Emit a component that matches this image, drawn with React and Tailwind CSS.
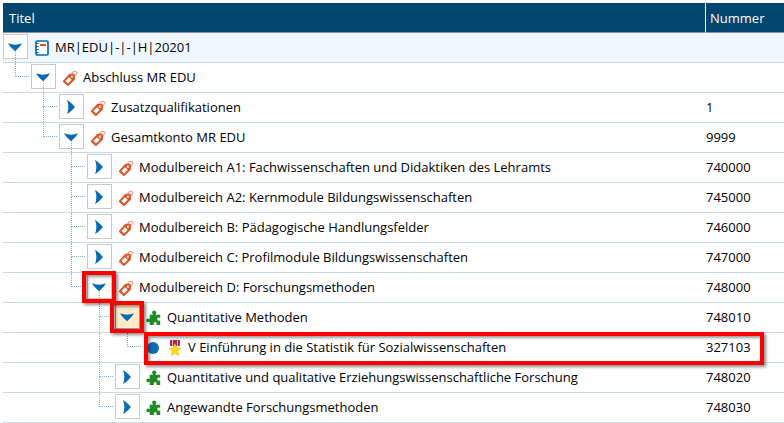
const rows = [
  { level: 0, guides: [], open: true, icon: 'book', title: 'MR|EDU|-|-|H|20201', number: '', selected: true },
  { level: 1, guides: ['end'], open: true, icon: 'tag', title: 'Abschluss MR EDU', number: '' },
  { level: 2, guides: ['none', 'tee'], open: false, icon: 'tag', title: 'Zusatzqualifikationen', number: '1' },
  { level: 2, guides: ['none', 'end'], open: true, icon: 'tag', title: 'Gesamtkonto MR EDU', number: '9999' },
  { level: 3, guides: ['none', 'none', 'tee'], open: false, icon: 'tag', title: 'Modulbereich A1: Fachwissenschaften und Didaktiken des Lehramts', number: '740000' },
  { level: 3, guides: ['none', 'none', 'tee'], open: false, icon: 'tag', title: 'Modulbereich A2: Kernmodule Bildungswissenschaften', number: '745000' },
  { level: 3, guides: ['none', 'none', 'tee'], open: false, icon: 'tag', title: 'Modulbereich B: Pädagogische Handlungsfelder', number: '746000' },
  { level: 3, guides: ['none', 'none', 'tee'], open: false, icon: 'tag', title: 'Modulbereich C: Profilmodule Bildungswissenschaften', number: '747000' },
  { level: 3, guides: ['none', 'none', 'end'], open: true, icon: 'tag', title: 'Modulbereich D: Forschungsmethoden', number: '748000', marked: true },
  { level: 4, guides: ['none', 'none', 'none', 'tee'], open: true, icon: 'puzzle', title: 'Quantitative Methoden', number: '748010', marked: true, focused: true },
  { level: 5, guides: ['none', 'none', 'none', 'line', 'end'], leaf: true, icon: 'medal', title: 'V Einführung in die Statistik für Sozialwissenschaften', number: '327103', framed: true },
  { level: 4, guides: ['none', 'none', 'none', 'tee'], open: false, icon: 'puzzle', title: 'Quantitative und qualitative Erziehungswissenschaftliche Forschung', number: '748020' },
  { level: 4, guides: ['none', 'none', 'none', 'end'], open: false, icon: 'puzzle', title: 'Angewandte Forschungsmethoden', number: '748030' },
];

function Icon({ name }) {
  if (name === 'book') {
    return (
      <svg className="size-4" viewBox="0 0 16 16" aria-hidden="true">
        <rect x="2" y="1" width="12" height="14" rx="1.2" fill="#fff" stroke="#0a6ab2" strokeWidth="1.7" />
        <path d="M1 3.500h3.600M1 6.500h3.600M1 9.500h3.600M1 12.500h3.600" stroke="#0a6ab2" strokeWidth="1.100" />
        <path d="M6 5h6" stroke="#dd5427" strokeWidth="2" />
      </svg>
    );
  }
  if (name === 'tag') {
    return (
      <svg className="size-4" viewBox="0 0 16 16" fill="none" aria-hidden="true">
        <path
          fillRule="evenodd"
          d="M1.300 10.400 6.900 4.300q.4-.4 1-.5l3.400-.3q.5 0 .9.300l.8.800q.3.300.3.800l-.4 3.600q-.1.500-.4.900l-5.700 5.700q-.8.800-1.600.1l-3.800-3.500q-.9-.8-.1-1.800ZM3.400 11.100l2.600 2.400 3.700-3.700-2.700-2.500ZM9.900 5.500a1.200 1.200 0 1 0 .1 2.400 1.200 1.200 0 0 0-.1-2.400Z"
          fill="#dd5427"
        />
        <path d="M10 6.600 13.400 4M9.300 3.200q1.700-1.900 3.900-1.800 2.200.3 1.700 2.100-.5 1.100-1.600 1.800" stroke="#e58a6b" strokeWidth="1" />
      </svg>
    );
  }
  if (name === 'puzzle') {
    return (
      <svg className="size-4" viewBox="0 0 16 16" aria-hidden="true">
        <path
          d="M3.700 4.700H6.800Q7 4.200 6.500 3.700A2.050 2.050 0 1 1 9.900 3.700Q9.400 4.200 9.700 4.700H14.200V7.500Q13.900 8 13.300 7.700A1.500 1.500 0 1 0 13.300 10.500Q13.900 10.200 14.200 10.700V15H10.700Q10.300 14.700 10.500 14.200A1.450 1.450 0 1 0 7.900 14.200Q8.100 14.700 7.700 15H3.700V12Q3.400 11.600 2.900 12A1.800 1.800 0 1 1 2.900 8.800Q3.400 9.200 3.700 8.800Z"
          fill="#1f8b24"
        />
      </svg>
    );
  }
  return (
    <svg className="h-[18px] w-4" viewBox="0 0 16 18" aria-hidden="true">
      <path d="M3 1h10v6H3Z" fill="#a32a57" />
      <path d="M5.500 1v6M10.500 1v6" stroke="#e5b3c6" strokeWidth="1" />
      <path d="m8 4.700 1.700 4.100 4.300.4-3.200 3 1 4.600L8 14.500l-3.800 2.300 1-4.600L2 9.200l4.300-.4Z" fill="#ffd91a" stroke="#edc21c" strokeWidth=".6" />
    </svg>
  );
}

function Chevron({ open }) {
  return (
    <svg className="relative z-10 size-4 shrink-0" viewBox="0 0 16 16" fill="#0a6ab2" aria-hidden="true">
      {open ? <path d="M1 4.300Q8 7 15 4.300 13.700 7.300 8 12.200 2.300 7.300 1 4.300Z" /> : <path d="M4 1Q6.700 8 4 15 7 13.700 12 8 7 2.300 4 1Z" />}
    </svg>
  );
}

function Guide({ kind }) {
  const line = 'border-dotted border-[#7db4dc]';
  return (
    <span className="flex h-full w-7 shrink-0 flex-col pr-0.5 pl-3">
      {kind !== 'none' && (
        <>
          <span className={`h-3.5 border-l ${line} ${kind === 'line' ? '' : 'border-b'}`} />
          {kind !== 'end' && <span className={`flex-1 border-l ${line}`} />}
        </>
      )}
    </span>
  );
}

const frame = 'pointer-events-none absolute z-20 border-4 border-[#fe0000] shadow-[2px_2px_3px_rgba(0,0,0,0.45),inset_2px_2px_3px_rgba(0,0,0,0.4)]';

function Toggle({ row }) {
  if (row.leaf) {
    return (
      <span className="flex w-6 shrink-0 items-center pl-1">
        <span className="size-3 rounded-full bg-[#0f6bb3]" />
      </span>
    );
  }
  return (
    <span className="relative flex h-full w-[31px] shrink-0 items-start pt-px">
      <button
        type="button"
        aria-expanded={row.open}
        aria-label={row.title}
        className={`flex size-[25px] items-center justify-center border pr-px ${row.focused ? 'border-[#8a9aa8] bg-[#ffecc9]' : 'border-[#c9c9c9] bg-white'}`}
      >
        <Chevron open={row.open} />
      </button>
      {row.open && !row.focused && <span className="absolute top-4 bottom-0 left-3 border-l border-dotted border-[#7db4dc]" />}
      {row.marked && <span className={`${frame} -top-0.5 -left-[5px] h-8 w-[34px]`} />}
    </span>
  );
}

export default function App() {
  return (
    <main className="bg-white pt-[3px] pl-[3px] font-['Open_Sans','Noto_Sans',sans-serif] text-[13px] leading-5 text-black">
      <table className="w-full table-fixed border-separate border-spacing-0">
        <colgroup>
          <col />
          <col className="w-[78px]" />
        </colgroup>
        <thead>
          <tr className="h-[30px] bg-[#03466f] text-left text-white">
            <th scope="col" className="border-r border-b border-r-white border-b-[#8f8f8f] p-0 pl-1.5 font-normal">Titel</th>
            <th scope="col" className="border-b border-[#8f8f8f] p-0 pl-1 font-normal">Nummer</th>
          </tr>
        </thead>
        <tbody>
          {rows.map((row) => (
            <tr key={row.title} className={`relative h-[30px] ${row.selected ? 'bg-[#f0f8ff]' : ''}`}>
              <td className="border-b border-[#c9d9e3] p-0">
                <div className="flex h-[29px] items-center whitespace-nowrap">
                  {row.guides.map((kind, i) => (
                    <Guide key={i} kind={kind} />
                  ))}
                  <Toggle row={row} />
                  <span className="mr-[5px] flex shrink-0">
                    <Icon name={row.icon} />
                  </span>
                  <span className="pb-0.5">{row.title}</span>
                </div>
                {row.framed && <span className={`${frame} -top-px right-5 left-[141px] h-[33px]`} />}
              </td>
              <td className="border-b border-[#c9d9e3] p-0 pb-0.5">{row.number}</td>
            </tr>
          ))}
        </tbody>
      </table>
    </main>
  );
}
